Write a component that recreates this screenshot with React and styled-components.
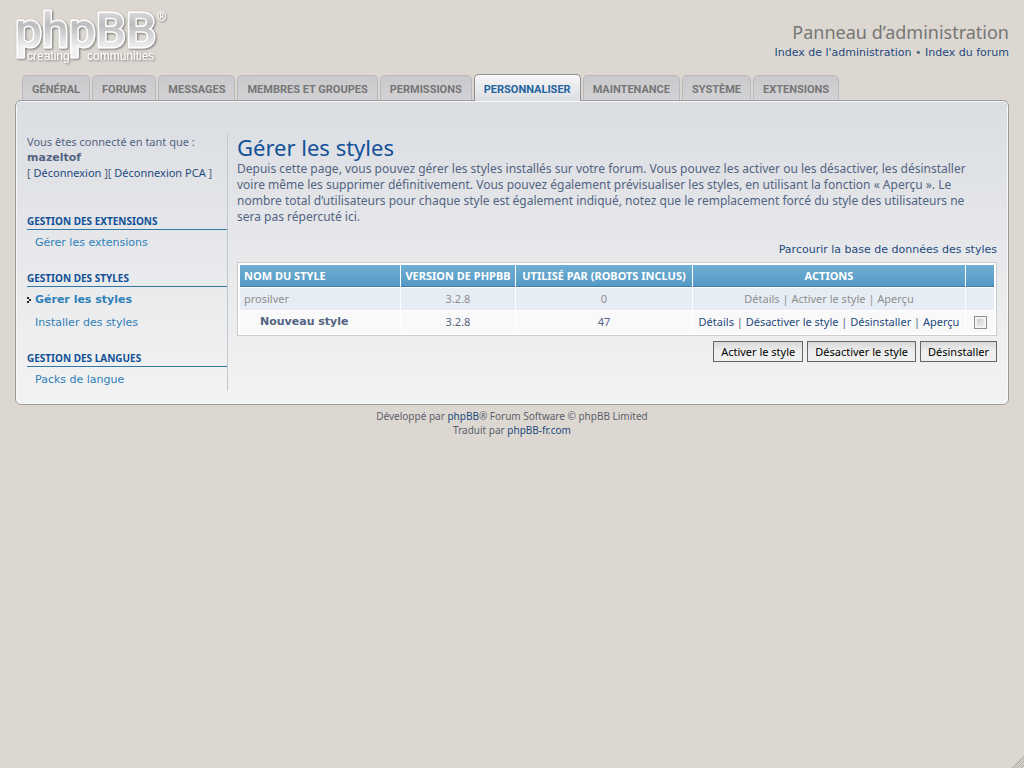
import React from "react";
import styled, { createGlobalStyle, css } from "styled-components";

const uiFont = '"Noto Sans", "Open Sans", sans-serif';
const wideFont = '"DejaVu Sans", "Noto Sans", sans-serif';

const GlobalStyle = createGlobalStyle`
  * { box-sizing: border-box; }
  html { min-height: 100%; background: #dcd8d1; }
  body {
    margin: 0;
    color: #536482;
    font: 11px/16px ${uiFont};
  }
  h1, h2, p, ul { margin: 0; padding: 0; }
  ul { list-style: none; }
`;

const Page = styled.div`
  min-height: 100vh;
  display: flex;
  flex-direction: column;
  padding: 0 15px;
`;

const Header = styled.header`
  display: flex;
  justify-content: space-between;
  align-items: flex-start;
  height: 74px;
`;

const LogoLink = styled.a`
  display: block;
  line-height: 0;
`;

const HeaderInfo = styled.div`
  padding-top: 20px;
  text-align: right;
`;

const SiteTitle = styled.h1`
  color: #767676;
  font-size: 18px;
  font-weight: 400;
  line-height: 24px;
`;

const HeaderLinks = styled.p`
  font-family: ${wideFont};
  line-height: 18px;
`;

const Link = styled.a`
  color: ${(p) => (p.$muted ? "#8f8f8f" : "#1f4a7d")};
  text-decoration: none;
  &:hover { text-decoration: underline; }
`;

const Tabs = styled.ul`
  display: flex;
  align-items: flex-end;
  gap: 2px;
  height: 26px;
  padding-left: 7px;
`;

const TabLink = styled.a`
  display: block;
  height: 25px;
  padding: 0 9px;
  border: 1px solid #b9b9bd;
  border-bottom: 0;
  border-radius: 5px 5px 0 0;
  background: linear-gradient(#c9c9cc, #d3d3d6);
  color: #767676;
  font: 700 11px/27px Roboto, "Liberation Sans", sans-serif;
  text-decoration: none;
  text-transform: uppercase;
  white-space: nowrap;
  ${(p) =>
    p.$active &&
    css`
      position: relative;
      height: 27px;
      margin-bottom: -1px;
      border-color: #8f8f93;
      background: linear-gradient(#f6f6f7, #dcdee2);
      box-shadow: inset 0 1px #fff;
      color: #23649f;
      line-height: 29px;
    `}
`;

const Panel = styled.main`
  display: flex;
  padding: 33px 11px 13px;
  border: 1px solid #999a9e;
  border-radius: 6px;
  background: linear-gradient(#dadde2, #f3f3f3);
  box-shadow: inset 0 0 0 1px #f8f8f9;
`;

const Sidebar = styled.nav`
  flex: 0 0 201px;
  height: 257px;
  border-right: 1px solid #c3c8cf;
`;

const Account = styled.p`
  height: 79px;
  line-height: 16px;
  white-space: nowrap;
  strong {
    display: block;
    font-family: ${wideFont};
    line-height: 15px;
  }
`;

const MenuHeading = styled.h2`
  height: 17px;
  border-bottom: 1px solid #327aa5;
  color: #115098;
  font-size: 10px;
  font-weight: 700;
  line-height: 17px;
  text-transform: uppercase;
`;

const Menu = styled.ul`
  padding: 1px 0 16px;
`;

const MenuLink = styled.a`
  display: flex;
  align-items: center;
  height: 23px;
  padding-left: ${(p) => (p.$active ? 0 : 8)}px;
  color: #2f80b8;
  font-family: ${wideFont};
  font-weight: ${(p) => (p.$active ? 700 : 400)};
  text-decoration: none;
  svg { margin-right: 4px; }
`;

const Content = styled.section`
  flex: 1;
  min-width: 0;
  padding-left: 9px;
`;

const Title = styled.h1`
  color: #115098;
  font-size: 22px;
  font-weight: 400;
  line-height: 26px;
`;

const Intro = styled.p`
  padding: 1px 24px 0 0;
  font-size: 12px;
  line-height: 16px;
`;

const Browse = styled.p`
  padding: 17px 0 4px;
  font-family: ${wideFont};
  text-align: right;
`;

const Table = styled.table`
  width: 100%;
  table-layout: fixed;
  border: 1px solid #ccc;
  border-spacing: 1px;
  background: #fff;
  padding: 1px;
`;

const Th = styled.th`
  height: 22px;
  padding: 0 4px;
  border-bottom: 1px solid #3f7ea9;
  background: linear-gradient(#70aed3, #5499c5);
  color: #fff;
  font-size: 11px;
  font-weight: 700;
  line-height: 16px;
  text-align: ${(p) => p.$align || "center"};
  text-transform: uppercase;
  white-space: nowrap;
`;

const Row = styled.tr`
  background: ${(p) => (p.$inactive ? "#e6edf4" : "#f9f9f9")};
  color: ${(p) => (p.$inactive ? "#8f8f8f" : "#536482")};
`;

const Td = styled.td`
  height: 22px;
  padding: 0 4px;
  text-align: center;
  white-space: nowrap;
`;

const NameCell = styled(Td)`
  padding-left: ${(p) => (p.$child ? 20 : 4)}px;
  font-family: ${(p) => (p.$child ? wideFont : uiFont)};
  font-weight: ${(p) => (p.$child ? 700 : 400)};
  text-align: left;
`;

const Checkbox = styled.input`
  appearance: none;
  display: block;
  width: 13px;
  height: 13px;
  margin: 0 auto;
  border: 1px solid #8a8f95;
  background: linear-gradient(135deg, #c3c7cc, #f6f6f6);
  box-shadow: inset 0 0 0 2px #f4f4f4;
  &:checked { background: #327aa5; }
`;

const Actions = styled.div`
  display: flex;
  justify-content: flex-end;
  gap: 4px;
  padding-top: 5px;
`;

const Button = styled.button`
  height: 21px;
  padding: 0 7px;
  border: 1px solid #666;
  background: linear-gradient(#d9d9d9, #efefef 50%);
  color: #000;
  font: 11px/19px ${uiFont};
`;

const Footer = styled.footer`
  padding-top: 4px;
  color: #5c5f6b;
  font-size: 10px;
  line-height: 14px;
  text-align: center;
`;

const Grip = styled.svg`
  position: fixed;
  right: 0;
  bottom: 0;
`;

const tabs = ["Général", "Forums", "Messages", "Membres et groupes", "Permissions", "Personnaliser", "Maintenance", "Système", "Extensions"];

const menus = [
  { title: "Gestion des extensions", items: ["Gérer les extensions"] },
  { title: "Gestion des styles", items: ["Gérer les styles", "Installer des styles"] },
  { title: "Gestion des langues", items: ["Packs de langue"] },
];

const styles = [
  { name: "prosilver", version: "3.2.8", users: 0, inactive: true, actions: ["Détails", "Activer le style", "Aperçu"] },
  { name: "Nouveau style", version: "3.2.8", users: 47, actions: ["Détails", "Désactiver le style", "Désinstaller", "Aperçu"] },
];

const columns = [160, 114, 176, 272, 28];

function Logo() {
  return (
    <svg width="156" height="68" viewBox="0 -8 156 68" role="img" aria-label="phpBB creating communities">
      <defs>
        <linearGradient id="silver" x1="0" y1="0" x2="0" y2="1">
          <stop offset="0.1" stopColor="#e4e4e6" />
          <stop offset="0.4" stopColor="#bdbdc0" />
          <stop offset="0.8" stopColor="#f0f0f0" />
        </linearGradient>
        <filter id="shade" x="-10%" y="-10%" width="120%" height="130%">
          <feDropShadow dx="1" dy="1" stdDeviation="1" floodColor="#666" floodOpacity="0.9" />
        </filter>
      </defs>
      <g filter="url(#shade)" fontFamily="Roboto, sans-serif" strokeLinejoin="round">
        <text x="0" y="39" fontSize="48" fontWeight="500" fill="url(#silver)" stroke="#fff" strokeWidth="3" paintOrder="stroke">phpBB</text>
        <text x="142" y="13" fontSize="12" fill="#fff">®</text>
        <text x="12" y="52" fontSize="12" fontFamily="Liberation Sans, sans-serif" fill="#fff">creating</text>
        <text x="72" y="52" fontSize="12" fontFamily="Liberation Sans, sans-serif" fill="#fff">communities</text>
      </g>
    </svg>
  );
}

function Separated({ items, muted }) {
  return items.map((item, i) => (
    <React.Fragment key={item}>
      {i > 0 && " | "}
      <Link $muted={muted} href="#">{item}</Link>
    </React.Fragment>
  ));
}

export default function App() {
  return (
    <>
      <GlobalStyle />
      <Page>
        <Header>
          <LogoLink href="#"><Logo /></LogoLink>
          <HeaderInfo>
            <SiteTitle>Panneau d’administration</SiteTitle>
            <HeaderLinks><Link href="#">Index de l'administration</Link> • <Link href="#">Index du forum</Link></HeaderLinks>
          </HeaderInfo>
        </Header>
        <Tabs>
          {tabs.map((tab) => (
            <li key={tab}><TabLink href="#" $active={tab === "Personnaliser"}>{tab}</TabLink></li>
          ))}
        </Tabs>
        <Panel>
          <Sidebar>
            <Account>
              Vous êtes connecté en tant que :
              <strong>mazeltof</strong>
              [ <Link href="#">Déconnexion</Link> ][ <Link href="#">Déconnexion PCA</Link> ]
            </Account>
            {menus.map((menu) => (
              <React.Fragment key={menu.title}>
                <MenuHeading>{menu.title}</MenuHeading>
                <Menu>
                  {menu.items.map((item) => {
                    const active = item === "Gérer les styles";
                    return (
                      <li key={item}>
                        <MenuLink href="#" $active={active}>
                          {active && (
                            <svg width="4" height="6" viewBox="0 0 4 6" aria-hidden="true">
                              <path d="M0 0h2v2H0zM2 2h2v2H2zM0 4h2v2H0z" fill="#222" />
                            </svg>
                          )}
                          {item}
                        </MenuLink>
                      </li>
                    );
                  })}
                </Menu>
              </React.Fragment>
            ))}
          </Sidebar>
          <Content>
            <Title>Gérer les styles</Title>
            <Intro>
              Depuis cette page, vous pouvez gérer les styles installés sur votre forum. Vous pouvez les activer ou les désactiver, les désinstaller voire même les supprimer définitivement. Vous pouvez également prévisualiser les styles, en utilisant la fonction « Aperçu ». Le nombre total d’utilisateurs pour chaque style est également indiqué, notez que le remplacement forcé du style des utilisateurs ne sera pas répercuté ici.
            </Intro>
            <Browse><Link href="#">Parcourir la base de données des styles</Link></Browse>
            <Table>
              <colgroup>
                {columns.map((w, i) => <col key={i} width={w} />)}
              </colgroup>
              <thead>
                <tr>
                  <Th $align="left">Nom du style</Th>
                  <Th>Version de phpBB</Th>
                  <Th>Utilisé par (robots inclus)</Th>
                  <Th>Actions</Th>
                  <Th aria-label="Sélection" />
                </tr>
              </thead>
              <tbody>
                {styles.map((s) => (
                  <Row key={s.name} $inactive={s.inactive}>
                    <NameCell $child={!s.inactive}>{s.name}</NameCell>
                    <Td>{s.version}</Td>
                    <Td>{s.users}</Td>
                    <Td><Separated items={s.actions} muted={s.inactive} /></Td>
                    <Td>{!s.inactive && <Checkbox type="checkbox" aria-label={s.name} />}</Td>
                  </Row>
                ))}
              </tbody>
            </Table>
            <Actions>
              <Button type="button">Activer le style</Button>
              <Button type="button">Désactiver le style</Button>
              <Button type="button">Désinstaller</Button>
            </Actions>
          </Content>
        </Panel>
        <Footer>
          Développé par <Link href="#">phpBB</Link>® Forum Software © phpBB Limited<br />
          Traduit par <Link href="#">phpBB-fr.com</Link>
        </Footer>
      </Page>
      <Grip width="14" height="14" viewBox="0 0 14 14" aria-hidden="true">
        <path d="M3 14L14 3M7 14L14 7M11 14L14 11" stroke="#a5a29d" strokeWidth="1" />
        <path d="M1 14L14 1M5 14L14 5M9 14L14 9" stroke="#c4c1bb" strokeWidth="1" />
      </Grip>
    </>
  );
}
